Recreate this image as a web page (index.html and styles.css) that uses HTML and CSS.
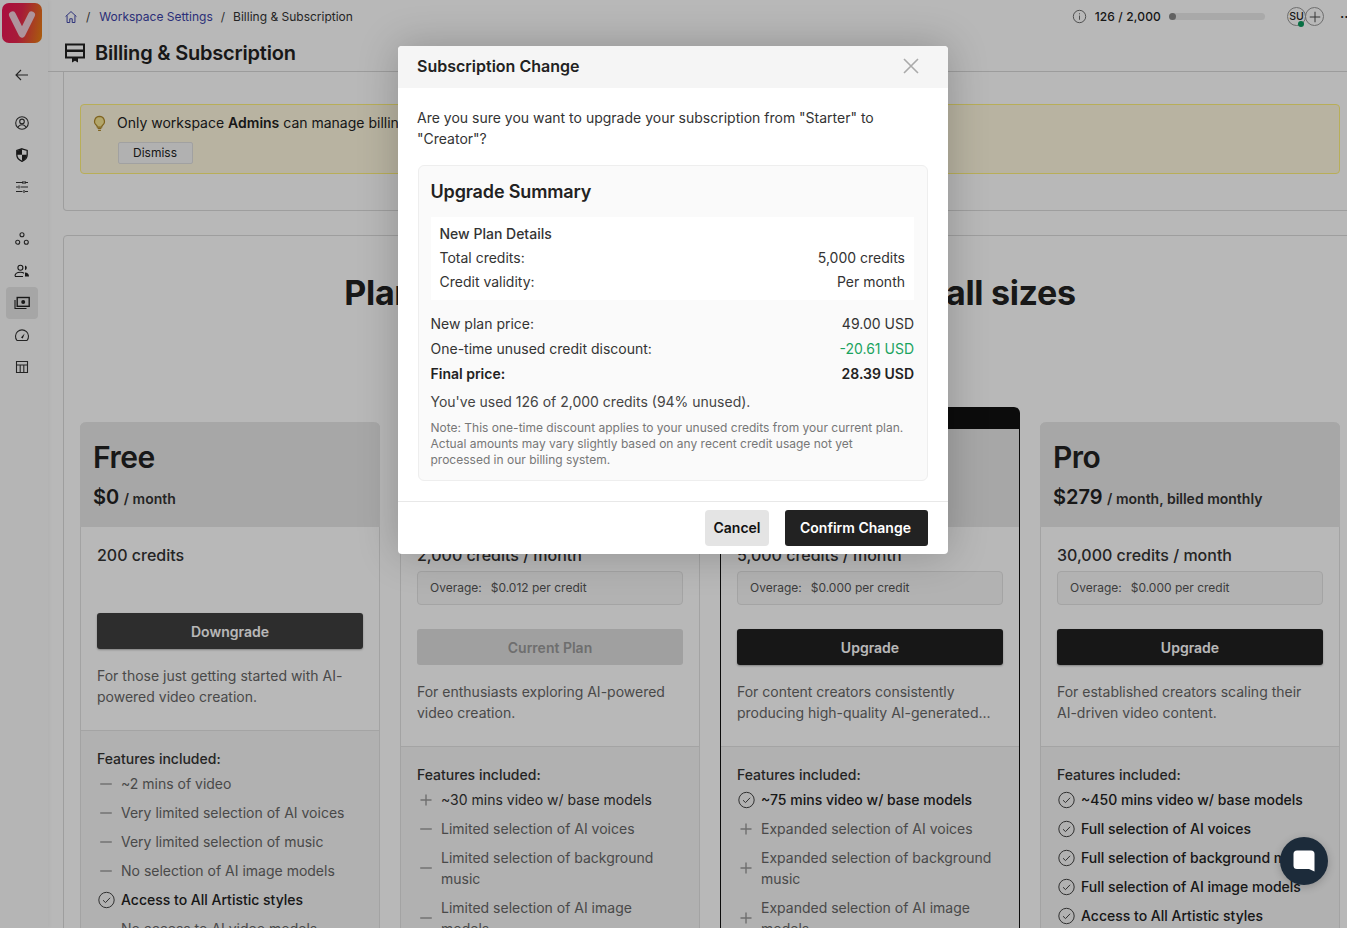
FILE: index.html
```html
<!DOCTYPE html>
<html lang="en">
<head>
<meta charset="utf-8">
<title>Billing &amp; Subscription</title>
<link rel="stylesheet" href="styles.css">
</head>
<body>
<svg class="defs" width="0" height="0" aria-hidden="true">
  <symbol id="i-check" viewBox="0 0 18 18"><circle cx="9.500" cy="9" r="7.700" fill="none" stroke="#444" stroke-width="1"/><path d="M6 9.200l2.500 2.400 4.600-4.800" fill="none" stroke="#444" stroke-width="1"/></symbol>
  <symbol id="i-plus" viewBox="0 0 18 18"><path d="M9 3.500v11M3.500 9h11" fill="none" stroke="#999" stroke-width="1.400"/></symbol>
  <symbol id="i-minus" viewBox="0 0 18 18"><path d="M3.200 9h11.600" fill="none" stroke="#999" stroke-width="1.400"/></symbol>
</svg>
<div class="app">
  <aside class="sidebar">
    <div class="logo"><svg viewBox="0 0 40 40" width="40" height="40"><path d="M10.500 12L20 31l9.500-19" fill="none" stroke="#f2cdd8" stroke-width="7" stroke-linecap="round" stroke-linejoin="round"/></svg></div>
    <div class="nav nav-back"><svg viewBox="0 0 16 16" width="16" height="16"><path d="M14 8H2.500M7 3L2 8l5 5" fill="none" stroke="#333" stroke-width="1.100"/></svg></div>
    <div class="nav nav-first"><svg viewBox="0 0 16 16" width="16" height="16"><circle cx="8" cy="8" r="6.300" fill="none" stroke="#333" stroke-width="1.100"/><circle cx="8" cy="6.400" r="2.300" fill="none" stroke="#333" stroke-width="1.100"/><path d="M3.900 12.600c1-2 2.500-2.800 4.100-2.800s3.100.8 4.100 2.800" fill="none" stroke="#333" stroke-width="1.100"/></svg></div>
    <div class="nav"><svg viewBox="0 0 16 16" width="16" height="16"><path d="M8 1.800l5.200 1.700v4.300c0 3.200-2.300 5.300-5.200 6.500-2.900-1.200-5.200-3.300-5.200-6.500V3.500z" fill="none" stroke="#222" stroke-width="1.300"/><path d="M8 2.200L3 3.800v3.900h5zM8 7.700v6.100c2.600-1 4.700-3 4.900-6.100z" fill="#222"/></svg></div>
    <div class="nav"><svg viewBox="0 0 16 16" width="16" height="16"><path d="M2 3.500h6.500M11 3.500h3M2 8h2M6.500 8H14M2 12.500h6.500M11 12.500h3M9 2v3M11 2v3M5 6.500v3M10 11v3" fill="none" stroke="#333" stroke-width="1.100"/></svg></div>
    <div class="nav nav-group"><svg viewBox="0 0 16 16" width="16" height="16"><circle cx="8" cy="3.800" r="2" fill="none" stroke="#333" stroke-width="1.100"/><circle cx="3.700" cy="11.300" r="2" fill="none" stroke="#333" stroke-width="1.100"/><circle cx="12.300" cy="11.300" r="2" fill="none" stroke="#333" stroke-width="1.100"/></svg></div>
    <div class="nav"><svg viewBox="0 0 16 16" width="16" height="16"><circle cx="6.400" cy="4.800" r="2.500" fill="none" stroke="#222" stroke-width="1.100"/><path d="M11 2.400a2.500 2.500 0 010 4.800z" fill="#222"/><path d="M1 13.300c0-3 2.200-4 5.400-4 1.500 0 2.800.3 3.600.9M1 13.500h8" fill="none" stroke="#222" stroke-width="1.100"/><path d="M11 9.500c2.300.2 4 1.200 4 4h-4z" fill="#222"/></svg></div>
    <div class="nav nav-active"><svg viewBox="0 0 16 16" width="16" height="16"><rect x="3.200" y="2.500" width="12" height="8.800" fill="none" stroke="#222" stroke-width="1.400"/><circle cx="9.200" cy="6.900" r="2" fill="#222"/><path d="M1 5v8.500h11.500" fill="none" stroke="#222" stroke-width="1.100"/></svg></div>
    <div class="nav"><svg viewBox="0 0 16 16" width="16" height="16"><path d="M3 13.500a6.500 6.500 0 1110 0z" fill="none" stroke="#333" stroke-width="1.100"/><path d="M7 10.500l3.600-4-1.800 5z" fill="#222"/></svg></div>
    <div class="nav"><svg viewBox="0 0 16 16" width="16" height="16"><path d="M2.500 2.500h11v11h-11zM2.500 6h11M6.200 6v7.500M9.800 6v7.500" fill="none" stroke="#333" stroke-width="1.100"/></svg></div>
  </aside>

  <div class="main">
    <header class="topbar">
      <nav class="crumbs">
        <svg viewBox="0 0 16 16" width="14" height="14"><path d="M1.800 7.500L8 1.800l6.200 5.700M3.500 6.300v8h3.100V10h2.800v4.300h3.100v-8" fill="none" stroke="#3b42a8" stroke-width="1.100"/></svg>
        <span class="sep">/</span>
        <span class="crumb-link">Workspace Settings</span>
        <span class="sep">/</span>
        <span>Billing &amp; Subscription</span>
      </nav>
      <div class="usage">
        <svg viewBox="0 0 16 16" width="15" height="15"><circle cx="8" cy="8" r="6.600" fill="none" stroke="#666" stroke-width="1"/><path d="M8 7v4.500M8 4.500v1.200" stroke="#666" stroke-width="1"/></svg>
        <span class="usage-num">126 / 2,000</span>
        <div class="usage-bar"><div class="usage-fill"></div></div>
        <div class="avatars">
          <div class="avatar">SU<span class="dot"></span></div>
          <div class="avatar avatar-add"><svg viewBox="0 0 16 16" width="14" height="14"><path d="M8 2v12M2 8h12" stroke="#444" stroke-width="1.100" fill="none"/></svg></div>
        </div>
        <span class="more">··</span>
      </div>
    </header>
    <div class="pagehead">
      <svg viewBox="0 0 20 20" width="20" height="20"><path d="M1 1.500h18v13H1z" fill="none" stroke="#222" stroke-width="2"/><path d="M1 6.500h18v2.500H1z" fill="#222"/><path d="M7 14h6v5.500l-3-1.800-3 1.800z" fill="#222"/></svg>
      <h1>Billing &amp; Subscription</h1>
    </div>
    <div class="content">
      <section class="notice-box">
        <div class="notice">
          <svg class="bulb" viewBox="0 0 16 18" width="15" height="17"><path d="M8 1.500a5.300 5.300 0 00-3.300 9.400c.7.600 1 1.200 1 2h4.600c0-.8.300-1.400 1-2A5.300 5.300 0 008 1.500z" fill="#f7e795" stroke="#b08a2a" stroke-width="1.300"/><path d="M6 14.300h4M6.500 16.300h3" stroke="#b08a2a" stroke-width="1.300"/></svg>
          <div class="notice-text">
            <p>Only workspace <b>Admins</b> can manage billing and subscription settings for this workspace.</p>
            <button class="dismiss">Dismiss</button>
          </div>
        </div>
      </section>
      <section class="plans">
        <h2>Plans for creators and enterprises of all sizes</h2>
        <div class="plan-grid">
          <article class="plan plan-free">
            <div class="plan-head"><h3>Free</h3><div class="price"><strong>$0</strong> / month</div></div>
            <div class="plan-body">
              <div class="credits">200 credits</div>
              <button class="cta cta-soft">Downgrade</button>
              <p class="desc">For those just getting started with AI-powered video creation.</p>
            </div>
            <div class="features">
              <div class="features-title">Features included:</div>
              <ul>
                <li class="muted"><svg><use href="#i-minus"/></svg>~2 mins of video</li>
                <li class="muted"><svg><use href="#i-minus"/></svg>Very limited selection of AI voices</li>
                <li class="muted"><svg><use href="#i-minus"/></svg>Very limited selection of music</li>
                <li class="muted"><svg><use href="#i-minus"/></svg>No selection of AI image models</li>
                <li class="strong"><svg><use href="#i-check"/></svg>Access to All Artistic styles</li>
                <li class="muted"><svg><use href="#i-minus"/></svg>No access to AI video models</li>
              </ul>
            </div>
          </article>
          <article class="plan">
            <div class="plan-head"><h3>Starter</h3><div class="price"><strong>$19</strong> / month</div></div>
            <div class="plan-body">
              <div class="credits">2,000 credits / month</div>
              <div class="overage"><span>Overage:</span><span>$0.012 per credit</span></div>
              <button class="cta cta-off">Current Plan</button>
              <p class="desc">For enthusiasts exploring AI-powered video creation.</p>
            </div>
            <div class="features">
              <div class="features-title">Features included:</div>
              <ul>
                <li><svg><use href="#i-plus"/></svg>~30 mins video w/ base models</li>
                <li class="muted"><svg><use href="#i-minus"/></svg>Limited selection of AI voices</li>
                <li class="muted"><svg><use href="#i-minus"/></svg>Limited selection of background music</li>
                <li class="muted"><svg><use href="#i-minus"/></svg>Limited selection of AI image models</li>
              </ul>
            </div>
          </article>
          <article class="plan plan-featured">
            <div class="ribbon">Most Popular</div>
            <div class="plan-head"><h3>Creator</h3><div class="price"><strong>$49</strong> / month</div></div>
            <div class="plan-body">
              <div class="credits">5,000 credits / month</div>
              <div class="overage"><span>Overage:</span><span>$0.000 per credit</span></div>
              <button class="cta">Upgrade</button>
              <p class="desc">For content creators consistently producing high-quality AI-generated...</p>
            </div>
            <div class="features">
              <div class="features-title">Features included:</div>
              <ul>
                <li class="strong"><svg><use href="#i-check"/></svg>~75 mins video w/ base models</li>
                <li class="muted"><svg><use href="#i-plus"/></svg>Expanded selection of AI voices</li>
                <li class="muted"><svg><use href="#i-plus"/></svg>Expanded selection of background music</li>
                <li class="muted"><svg><use href="#i-plus"/></svg>Expanded selection of AI image models</li>
              </ul>
            </div>
          </article>
          <article class="plan">
            <div class="plan-head"><h3>Pro</h3><div class="price"><strong>$279</strong> / month, billed monthly</div></div>
            <div class="plan-body">
              <div class="credits">30,000 credits / month</div>
              <div class="overage"><span>Overage:</span><span>$0.000 per credit</span></div>
              <button class="cta">Upgrade</button>
              <p class="desc">For established creators scaling their AI-driven video content.</p>
            </div>
            <div class="features">
              <div class="features-title">Features included:</div>
              <ul>
                <li class="strong"><svg><use href="#i-check"/></svg>~450 mins video w/ base models</li>
                <li class="strong"><svg><use href="#i-check"/></svg>Full selection of AI voices</li>
                <li class="strong"><svg><use href="#i-check"/></svg>Full selection of background music</li>
                <li class="strong"><svg><use href="#i-check"/></svg>Full selection of AI image models</li>
                <li class="strong"><svg><use href="#i-check"/></svg>Access to All Artistic styles</li>
              </ul>
            </div>
          </article>
        </div>
      </section>
    </div>
  </div>
</div>

<div class="mask"></div>

<div class="chat"><svg viewBox="0 0 24 24" width="24" height="24"><path d="M5 1.500h14a3.500 3.500 0 013.500 3.500v17.500L17 20H5a3.500 3.500 0 01-3.500-3.500V5A3.500 3.500 0 015 1.500z" fill="#fff"/></svg></div>

<div class="modal">
  <div class="modal-head">
    <span>Subscription Change</span>
    <svg viewBox="0 0 16 16" width="16" height="16"><path d="M1 1l14 14M15 1L1 15" stroke="#aaa" stroke-width="1.600" fill="none"/></svg>
  </div>
  <div class="modal-body">
    <p class="question">Are you sure you want to upgrade your subscription from "Starter" to "Creator"?</p>
    <div class="summary">
      <h4>Upgrade Summary</h4>
      <div class="details">
        <div class="details-title">New Plan Details</div>
        <div class="row"><span>Total credits:</span><span>5,000 credits</span></div>
        <div class="row"><span>Credit validity:</span><span>Per month</span></div>
      </div>
      <div class="prices">
        <div class="row"><span>New plan price:</span><span>49.00 USD</span></div>
        <div class="row"><span>One-time unused credit discount:</span><span class="green">-20.61 USD</span></div>
        <div class="row row-bold"><span>Final price:</span><span>28.39 USD</span></div>
      </div>
      <p class="used">You've used 126 of 2,000 credits (94% unused).</p>
      <p class="note">Note: This one-time discount applies to your unused credits from your current plan. Actual amounts may vary slightly based on any recent credit usage not yet processed in our billing system.</p>
    </div>
  </div>
  <div class="modal-foot">
    <button class="btn-cancel">Cancel</button>
    <button class="btn-confirm">Confirm Change</button>
  </div>
</div>
</body>
</html>
```

FILE: styles.css
```css
* { box-sizing: border-box; }
html, body { margin: 0; height: 928px; overflow: hidden; }
body { font-family: Inter, "Liberation Sans", sans-serif; color: #222; background: #fff; position: relative; }
.defs { position: absolute; }
h1, h2, h3, h4, p, ul { margin: 0; padding: 0; }
button { font-family: inherit; cursor: pointer; }

.app { display: flex; width: 1347px; height: 928px; overflow: hidden; }

.sidebar { width: 48px; flex: none; background: #fbfbfb; display: flex; flex-direction: column; align-items: center; padding-top: 3px; padding-right: 4px; box-shadow: 1px 0 4px rgba(0,0,0,.05); }
.logo { width: 40px; height: 40px; border-radius: 7px; background: linear-gradient(100deg, #ec1558 0%, #e8264f 45%, #ea8410 100%); }
.nav { width: 32px; height: 32px; display: flex; align-items: center; justify-content: center; flex: none; border-radius: 4px; }
.nav-back { margin-top: 16px; }
.nav-first { margin-top: 16px; }
.nav-group { margin-top: 20px; }
.nav-active { background: #e6e6e6; }

.main { width: 1299px; flex: none; }
.topbar { height: 33px; display: flex; justify-content: space-between; align-items: center; padding: 0 0 0 16px; }
.crumbs { display: flex; align-items: center; font-size: 12px; color: #333; }
.sep { margin: 0 8px; color: #444; }
.sep:first-of-type { margin-right: 9px; }
.crumb-link { color: #3b42a8; }
.usage { display: flex; align-items: center; font-size: 12px; font-weight: 500; margin-right: -1px; }
.usage-num { margin-left: 8px; letter-spacing: .15px; }
.usage-bar { width: 96px; height: 7px; margin-left: 8px; border-radius: 4px; background: #eaeaea; }
.usage-fill { width: 7px; height: 7px; border-radius: 4px; background: #888; }
.avatars { display: flex; margin-left: 22px; }
.avatar { width: 19px; height: 19px; border-radius: 50%; border: 1px solid #999; font-size: 10.500px; display: flex; align-items: center; justify-content: center; position: relative; color: #222; }
.avatar-add { margin-left: -1px; }
.dot { position: absolute; width: 6px; height: 6px; border-radius: 50%; background: #0a9a5d; left: 10px; bottom: -2px; }
.more { margin-left: 16px; font-size: 14px; width: 8px; white-space: nowrap; }

.pagehead { height: 39px; display: flex; align-items: center; gap: 10px; padding: 2px 0 0 17px; border-bottom: 1px solid #d8d8d8; }
.pagehead h1 { font-size: 20px; font-weight: 600; line-height: 28px; letter-spacing: -.2px; }

.content { padding: 0 0 0 15px; width: 1294px; }
.notice-box { width: 1294px; height: 139px; padding: 32px 16px 0; border: 1px solid #dcdcdc; border-top: 0; border-radius: 0 0 4px 4px; }
.notice { width: 1260px; height: 70px; background: #fff8e0; border: 1px solid #fff27a; border-radius: 4px; display: flex; padding: 8px 11px; gap: 10px; }
.bulb { margin-top: 2px; flex: none; }
.notice-text p { font-size: 14px; line-height: 20px; }
.notice-text b { font-weight: 600; }
.dismiss { margin-top: 9px; margin-left: 1px; width: 75px; height: 22px; font-size: 12px; border: 1px solid #e0e0e0; background: #f5f5f5; border-radius: 2px; color: #222; padding: 0 1px 2px 0; display: block; }

.plans { width: 1294px; margin-top: 24px; padding: 0 16px; border: 1px solid #dcdcdc; border-radius: 4px; height: 900px; }
.plans h2 { text-align: center; font-size: 34px; font-weight: 700; line-height: 44px; padding-top: 35px; height: 186px; letter-spacing: -.32px; white-space: nowrap; }
.plan-grid { display: grid; grid-template-columns: repeat(4, 300px); gap: 20px; align-items: start; }
.plan { position: relative; border: 1px solid #e2e2e2; border-radius: 6px; border-top: 0; }
.plan-featured { border-color: #111; }
.ribbon { position: absolute; left: -1px; right: -1px; top: -15px; height: 22px; background: #111; color: #fff; font-size: 12px; text-align: center; border-radius: 6px 6px 0 0; line-height: 22px; }
.plan-head { height: 105px; background: #e8e8e8; margin: 0 -1px; padding: 16px 13px 0; border-radius: 6px 6px 0 0; }
.plan-featured .plan-head { margin: 0; }
.plan-head h3 { font-size: 30px; font-weight: 600; line-height: 38px; letter-spacing: -.5px; }
.price { margin-top: 6px; font-size: 14px; font-weight: 600; line-height: 30px; color: #333; }
.price strong { font-size: 20px; font-weight: 600; color: #222; margin-right: 1px; }
.plan-body { padding: 16px 16px 23px; }
.credits { font-size: 16px; line-height: 24px; font-weight: 500; color: #333; }
.plan-free .credits { margin-bottom: 46px; }
.overage { margin-top: 4px; height: 34px; border: 1px solid #e4e4e4; background: #f7f7f7; border-radius: 4px; display: flex; align-items: center; gap: 9px; padding: 0 12px 1px; font-size: 12px; color: #555; }
.cta { display: block; width: 100%; height: 36px; border: 0; border-radius: 3px; background: #212121; color: #fff; font-size: 14px; font-weight: 600; margin-top: 24px; box-shadow: 0 1px 2px rgba(0,0,0,.3); }
.plan-free .cta { margin-top: 0; }
.cta-soft { background: #3f3f3f; }
.cta-off { background: #dedede; color: #999; box-shadow: none; }
.desc { margin-top: 16px; font-size: 14px; line-height: 21px; color: #666; }
.features { background: #f5f5f5; border-top: 1px solid #e4e4e4; padding: 18px 16px 40px; height: 400px; }
.features-title { font-size: 14px; line-height: 20px; font-weight: 500; color: #333; }
.features ul { list-style: none; }
.features li { display: flex; align-items: center; gap: 6px; font-size: 14px; line-height: 21px; padding: 4px 0; color: #333; }
.features li.muted { color: #666; }
.features li.strong { color: #222; font-weight: 500; }
.features li svg { width: 18px; height: 18px; flex: none; }

.mask { position: absolute; inset: 0; background: rgba(0,0,0,.28); }

.chat { position: absolute; left: 1280px; top: 837px; width: 48px; height: 48px; border-radius: 50%; background: #1c2b3a; display: flex; align-items: center; justify-content: center; box-shadow: 0 2px 8px rgba(0,0,0,.2); }

.modal { position: absolute; left: 398px; top: 46px; width: 550px; height: 508px; background: #fff; border-radius: 4px; box-shadow: 0 0 40px rgba(0,0,0,.22); display: flex; flex-direction: column; overflow: hidden; }
.modal-head { height: 42px; flex: none; background: #f5f5f5; display: flex; align-items: center; justify-content: space-between; padding: 0 29px 2px 19px; font-size: 16px; font-weight: 600; color: #222; }
.modal-body { padding: 19px 20px 0 19px; flex: 1; }
.question { font-size: 14px; line-height: 21px; color: #333; }
.summary { margin: 16px 0 0 1px; height: 316px; background: #fafafa; border: 1px solid #eee; border-radius: 6px; padding: 12px 13px 0 11.500px; }
.summary h4 { font-size: 18px; font-weight: 600; line-height: 28px; color: #222; letter-spacing: -.15px; }
.details { margin-top: 11px; background: #fff; height: 83px; padding: 5px 9px 5px 9px; }
.details-title { font-size: 14px; line-height: 24px; font-weight: 500; color: #333; }
.row { display: flex; justify-content: space-between; font-size: 14px; line-height: 24px; color: #333; }
.prices { margin-top: 11px; }
.prices .row { line-height: 25px; }
.row-bold { font-weight: 600; color: #222; }
.green { color: #1aa35f; }
.used { margin-top: 5px; font-size: 14px; line-height: 21px; color: #444; }
.note { margin-top: 8px; font-size: 12px; line-height: 16px; color: #777; }
.modal-foot { height: 53px; flex: none; border-top: 1px solid #e8e8e8; display: flex; justify-content: flex-end; align-items: flex-start; gap: 16px; padding: 8px 20px 0; }
.btn-cancel { width: 64px; height: 36px; background: #e4e4e4; border: 0; border-radius: 4px; font-size: 14px; font-weight: 600; color: #111; padding: 0 0 1px; }
.btn-confirm { width: 143px; height: 36px; background: #222; border: 0; border-radius: 3px; font-size: 14px; font-weight: 600; color: #fff; padding: 0 2px 2px 0; }
```
